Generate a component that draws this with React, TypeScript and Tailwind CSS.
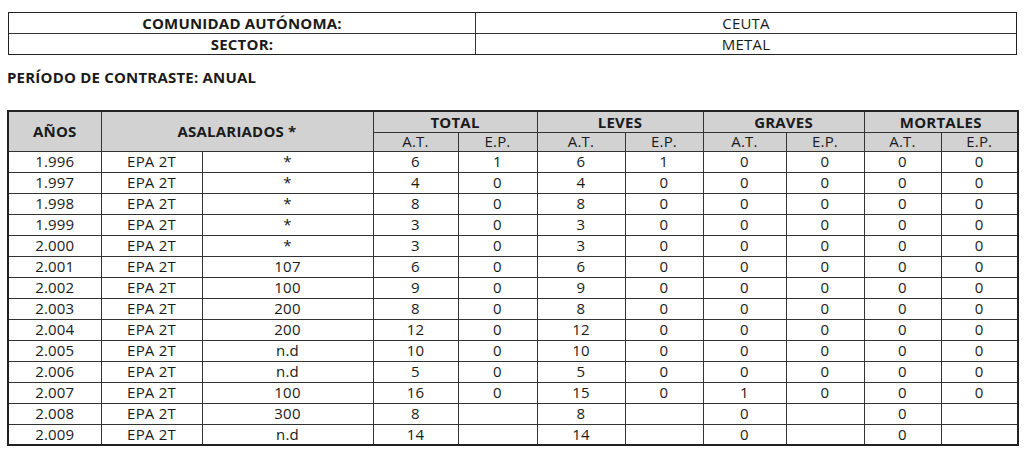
const rows: string[][] = [
  ["1.996", "EPA 2T", "*", "6", "1", "6", "1", "0", "0", "0", "0"],
  ["1.997", "EPA 2T", "*", "4", "0", "4", "0", "0", "0", "0", "0"],
  ["1.998", "EPA 2T", "*", "8", "0", "8", "0", "0", "0", "0", "0"],
  ["1.999", "EPA 2T", "*", "3", "0", "3", "0", "0", "0", "0", "0"],
  ["2.000", "EPA 2T", "*", "3", "0", "3", "0", "0", "0", "0", "0"],
  ["2.001", "EPA 2T", "107", "6", "0", "6", "0", "0", "0", "0", "0"],
  ["2.002", "EPA 2T", "100", "9", "0", "9", "0", "0", "0", "0", "0"],
  ["2.003", "EPA 2T", "200", "8", "0", "8", "0", "0", "0", "0", "0"],
  ["2.004", "EPA 2T", "200", "12", "0", "12", "0", "0", "0", "0", "0"],
  ["2.005", "EPA 2T", "n.d", "10", "0", "10", "0", "0", "0", "0", "0"],
  ["2.006", "EPA 2T", "n.d", "5", "0", "5", "0", "0", "0", "0", "0"],
  ["2.007", "EPA 2T", "100", "16", "0", "15", "0", "1", "0", "0", "0"],
  ["2.008", "EPA 2T", "300", "8", "", "8", "", "0", "", "0", ""],
  ["2.009", "EPA 2T", "n.d", "14", "", "14", "", "0", "", "0", ""],
];

const widths = [93, 101, 171, 85, 79, 88, 78, 83, 78, 77, 77];
const groups = ["TOTAL", "LEVES", "GRAVES", "MORTALES"];

export default function App() {
  return (
    <div className="h-[458px] w-[1024px] overflow-hidden bg-white font-['Open_Sans','Lato',sans-serif] text-[15px] tracking-[0.2px] text-[#1a1a1a]">
      {/* cabecera: comunidad / sector */}
      <div className="ml-[8px] mt-[12px] w-[1009px] border-[1.5px] border-[#222]">
        <div className="flex h-[21px] border-b border-[#333]">
          <div className="flex w-[467px] items-center justify-center border-r border-[#333] font-bold">
            COMUNIDAD AUTÓNOMA:
          </div>
          <div className="flex flex-1 items-center justify-center">CEUTA</div>
        </div>
        <div className="flex h-[20px]">
          <div className="flex w-[467px] items-center justify-center border-r border-[#333] font-bold">
            SECTOR:
          </div>
          <div className="flex flex-1 items-center justify-center">METAL</div>
        </div>
      </div>

      <p className="ml-[7px] mt-[13px] font-bold leading-[18px]">PERÍODO DE CONTRASTE: ANUAL</p>

      <table className="ml-[7px] mt-[24px] table-fixed border-collapse border-2 border-[#222] text-center">
        <colgroup>
          {widths.map((w, i) => (
            <col key={i} style={{ width: w }} />
          ))}
        </colgroup>
        <thead className="bg-[#d2d2d2]">
          <tr className="h-[21px]">
            <th rowSpan={2} className="border border-[#333] font-bold">
              AÑOS
            </th>
            <th colSpan={2} rowSpan={2} className="border border-[#333] font-bold">
              ASALARIADOS *
            </th>
            {groups.map((g) => (
              <th key={g} colSpan={2} className="border border-[#333] font-bold leading-[18px]">
                {g}
              </th>
            ))}
          </tr>
          <tr className="h-[19px]">
            {groups.map((g) => [
              <th key={g + "at"} className="border border-[#333] font-normal leading-[17px]">
                A.T.
              </th>,
              <th key={g + "ep"} className="border border-[#333] font-normal leading-[17px]">
                E.P.
              </th>,
            ])}
          </tr>
        </thead>
        <tbody>
          {rows.map((r) => (
            <tr key={r[0]} className="h-[21px]">
              {r.map((c, j) => (
                <td key={j} className="border border-[#333] p-0 leading-[19px]">
                  {c}
                </td>
              ))}
            </tr>
          ))}
        </tbody>
      </table>
    </div>
  );
}
